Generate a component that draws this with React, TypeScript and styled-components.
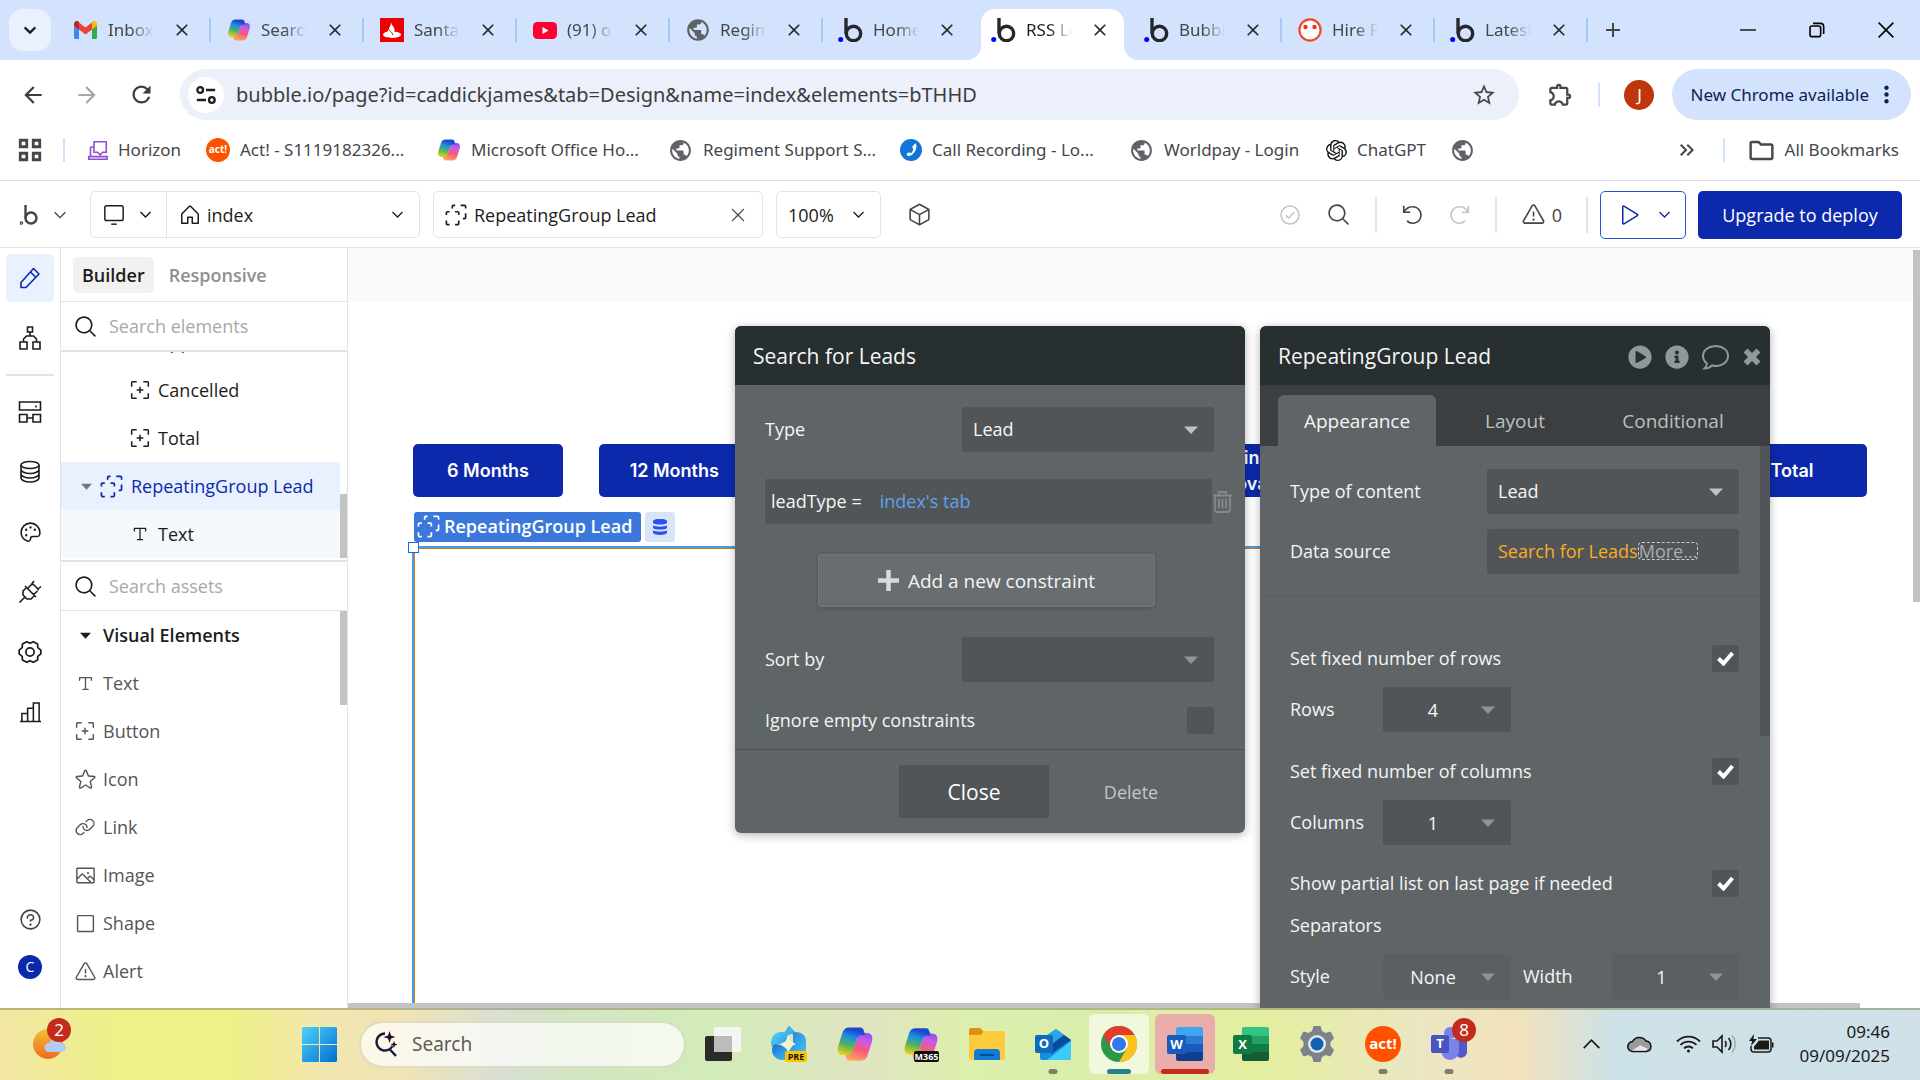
import React from "react";
import styled, { createGlobalStyle, css } from "styled-components";
import {
  MdArrowBack, MdArrowForward, MdRefresh, MdStarBorder, MdOutlineExtension,
  MdMoreVert, MdKeyboardDoubleArrowRight, MdOutlineFolder, MdPublic, MdClose, MdAdd,
} from "react-icons/md";
import { SiOpenai } from "react-icons/si";
import { FaPlayCircle, FaInfoCircle } from "react-icons/fa";
import {
  PiMagnifyingGlass, PiHouse, PiCube, PiWarning, PiStar, PiLink, PiImage, PiPalette,
  PiCheckCircle, PiQuestion, PiX, PiPlay, PiTextT, PiSquare,
} from "react-icons/pi";

const ui = '"Open Sans", "Noto Sans", sans-serif';
const chromeFont = '"Noto Sans", "Open Sans", sans-serif';
const blue = "#0d29ab";
const line = "#e3e3e3";

const Global = createGlobalStyle`
  * { box-sizing: border-box; }
  body { margin: 0; overflow: hidden; background: #fff; }
  button, input, select { font: inherit; color: inherit; }
  button { border: 0; padding: 0; background: none; cursor: pointer; }
  svg { display: block; flex: none; }
`;

const Screen = styled.div`
  display: flex;
  flex-direction: column;
  height: 100vh;
  overflow: hidden;
  font: 400 18px/24px ${ui};
  color: #1c1c1c;
`;

/* ---------- shared line icons ---------- */

type IconProps = { size?: number; weight?: number; children?: React.ReactNode };
const Stroke = ({ size = 24, weight = 1.6, children }: IconProps) => (
  <svg width={size} height={size} viewBox="0 0 24 24" fill="none" stroke="currentColor" strokeWidth={weight} aria-hidden="true">
    {children}
  </svg>
);
const Chevron = ({ size = 18, weight = 2 }: IconProps) => (
  <Stroke size={size} weight={weight}><path d="M4 8l8 8 8-8" /></Stroke>
);
const GroupIcon = ({ size = 24 }: IconProps) => (
  <Stroke size={size} weight={1.8}>
    <path d="M1.500 12V9.500a1 1 0 0 1 1-1H5M11 8.500h3a1 1 0 0 1 1 1V12M15 18v3.500a1 1 0 0 1-1 1h-3M5 22.500H2.500a1 1 0 0 1-1-1V18" />
    <path d="M8 5V2.500a1 1 0 0 1 1-1h2M17 1.500h4.500a1 1 0 0 1 1 1V5M22.500 10v5a1 1 0 0 1-1 1h-2" />
  </Stroke>
);
const ButtonIcon = ({ size = 20 }: IconProps) => (
  <Stroke size={size} weight={1.8}>
    <path d="M2 8V3a1 1 0 0 1 1-1h5M16 2h5a1 1 0 0 1 1 1v5M22 16v5a1 1 0 0 1-1 1h-5M8 22H3a1 1 0 0 1-1-1v-5M12 8v8M8 12h8" />
  </Stroke>
);
const Caret = ({ color = "#a9b1b5", size = 14 }: { color?: string; size?: number }) => (
  <svg width={size} height={size} viewBox="0 0 14 14" aria-hidden="true"><path d="M0 3.500h14L7 11z" fill={color} /></svg>
);
const Cross = () => (
  <svg width="20" height="20" viewBox="0 0 20 20" aria-hidden="true">
    <path d="M3.500 3.500l13 13M16.500 3.500l-13 13" stroke="currentColor" strokeWidth="5.500" />
  </svg>
);
const Plus = () => (
  <svg width="21" height="21" viewBox="0 0 21 21" aria-hidden="true">
    <path d="M10.500 0v21M0 10.500h21" stroke="#d8dadb" strokeWidth="4.500" />
  </svg>
);
const TickMark = () => (
  <svg width="17" height="15" viewBox="0 0 17 15" aria-hidden="true">
    <path d="M1.500 7.500l5 5L15.500 2" fill="none" stroke="#fff" strokeWidth="4" />
  </svg>
);

/* ---------- logos ---------- */

const BubbleLogo = () => (
  <svg width="25" height="24" viewBox="0 0 25 24" fill="none" aria-hidden="true">
    <path d="M8 0v15.500" stroke="#26272c" strokeWidth="3.400" />
    <circle cx="15.500" cy="15.500" r="7.200" stroke="#26272c" strokeWidth="3.400" />
    <circle cx="2.700" cy="21.400" r="2.500" fill="#0000ff" />
  </svg>
);
const Gmail = () => (
  <svg width="23" height="18" viewBox="0 0 23 18" aria-hidden="true">
    <path d="M0 3v13.500A1.500 1.500 0 0 0 1.500 18H5V7z" fill="#4285f4" />
    <path d="M23 3v13.500a1.500 1.500 0 0 1-1.500 1.500H18V7z" fill="#34a853" />
    <path d="M5 1.500v7l6.500 5 6.500-5v-7l-6.500 5z" fill="#ea4335" />
    <path d="M0 3c0-2.600 2.900-4 5-2.200V8.500L0 4.700z" fill="#c5221f" />
    <path d="M23 3c0-2.600-2.900-4-5-2.200V8.500l5-3.800z" fill="#fbbc04" />
  </svg>
);
const ribbon = "M8.500 1.500H15c2 0 2.300 1 2.800 2.800L18.400 6.500H16c-1.800 0-2.600 1-3.200 3l-2 6.500c-.6 2-1.500 3-3.400 3H4.500C1.500 19 .5 16.500 1.300 13.500L4 5c.7-2.300 2-3.500 4.500-3.500z";
const Copilot = ({ size = 24, id }: { size?: number; id: string }) => (
  <svg width={size} height={size} viewBox="0 0 24 24" aria-hidden="true">
    <defs>
      <linearGradient id={id + "a"} x1="0.600" y1="0" x2="0.300" y2="1">
        <stop offset="0.100" stopColor="#1b48cf" /><stop offset="0.350" stopColor="#1a8fe0" />
        <stop offset="0.650" stopColor="#52b25c" /><stop offset="1" stopColor="#e8cf1a" />
      </linearGradient>
      <linearGradient id={id + "b"} x1="0.600" y1="0" x2="0.300" y2="1">
        <stop offset="0" stopColor="#ffa45c" /><stop offset="0.400" stopColor="#f9587c" />
        <stop offset="0.750" stopColor="#c65be8" /><stop offset="1" stopColor="#8a50f0" />
      </linearGradient>
    </defs>
    <path d={ribbon} fill={`url(#${id}b)`} transform="rotate(180 12 12)" />
    <path d={ribbon} fill={`url(#${id}a)`} />
  </svg>
);
const Santander = () => (
  <svg width="24" height="24" viewBox="0 0 24 24" aria-hidden="true">
    <rect width="24" height="24" fill="#ec0000" />
    <path d="M11 4c0 3 4 5 4 8 0 .6 0 1-.2 1.500C18.500 14 21 15 21 16.600 21 18.600 17 20 12 20s-9-1.400-9-3.400c0-1.400 1.800-2.600 4.800-3.200C7.500 11 11 9 11 4z" fill="#fff" />
    <path d="M8 10c.5 3 5 4 4.500 7M13 7c2 3 2.500 5 2 7" stroke="#ec0000" fill="none" strokeWidth="1" />
  </svg>
);
const YouTube = () => (
  <svg width="24" height="17" viewBox="0 0 24 17" aria-hidden="true">
    <rect width="24" height="17" rx="4.500" fill="#ff0033" /><path d="M9.500 5v7l6-3.500z" fill="#fff" />
  </svg>
);
const Face = () => (
  <svg width="24" height="24" viewBox="0 0 24 24" aria-hidden="true">
    <circle cx="12" cy="12" r="10.600" fill="#fff" stroke="#f2492d" strokeWidth="2.200" />
    <circle cx="7.500" cy="9" r="2.200" fill="#e8321e" /><circle cx="16.500" cy="9" r="2.200" fill="#e8321e" />
  </svg>
);
const Act = ({ size = 24 }: IconProps) => (
  <svg width={size} height={size} viewBox="0 0 36 36" aria-hidden="true">
    <circle cx="18" cy="18" r="18" fill="#ff5100" />
    <text x="18" y="23" textAnchor="middle" fontFamily={ui} fontWeight="700" fontSize="15" fill="#fff">act!</text>
  </svg>
);
const Horizon = () => (
  <svg width="21" height="21" viewBox="0 0 24 24" fill="none" stroke="#8e4fd0" strokeWidth="1.800" aria-hidden="true">
    <path d="M8 2h14v12h-4l-3 3-3-3H8zM4 8v10M2 22h21v-3H2zM4 8h4" />
  </svg>
);
const Call = () => (
  <svg width="22" height="22" viewBox="0 0 24 24" aria-hidden="true">
    <circle cx="12" cy="12" r="12" fill="#1274d4" />
    <path d="M16.500 4.500c2 1 2 5 0 8.500s-5 6-8 5.500l-1.500-2.500 3-1.500 1.500 1c2-1 3-3.500 3-5.500l-1.500-1z" fill="#fff" />
  </svg>
);
const BrandMark = () => (
  <svg width="18" height="22" viewBox="0 0 18 22" fill="none" stroke="#444" strokeWidth="2.400" aria-hidden="true">
    <path d="M5.500 1v13" /><circle cx="11" cy="14" r="5.500" /><circle cx="1.400" cy="19" r="0.600" />
  </svg>
);

/* ---------- browser frame ---------- */

const TabStrip = styled.header`
  display: flex;
  align-items: flex-start;
  height: 60px;
  flex: none;
  padding-left: 9px;
  background: #d3e2fd;
  font: 400 17px/24px ${chromeFont};
  color: #45474a;
`;
const TabSearch = styled.button`
  display: grid;
  place-items: center;
  width: 42px;
  height: 42px;
  margin: 9px 7px 0 0;
  border-radius: 14px;
  background: #eaf1fe;
  color: #1f1f1f;
`;
const TabSlot = styled.div<{ $bar?: boolean }>`
  display: flex;
  width: 153px;
  height: 60px;
  padding: 9px 5px 0;
  position: relative;
  ${(p) => p.$bar && css`
    &::after {
      content: "";
      position: absolute;
      right: 0;
      top: 18px;
      width: 2px;
      height: 24px;
      background: #a8c7fa;
    }
  `}
`;
const Tab = styled.div<{ $active?: boolean }>`
  display: flex;
  align-items: center;
  flex: 1;
  min-width: 0;
  height: 51px;
  padding: 0 14px 9px 10px;
  ${(p) => p.$active && css`
    position: relative;
    background: #fff;
    color: #1f1f1f;
    border-radius: 14px 14px 0 0;
    &::before, &::after {
      content: "";
      position: absolute;
      bottom: 0;
      width: 14px;
      height: 14px;
    }
    &::before { right: 100%; background: radial-gradient(circle at 0 0, transparent 14px, #fff 14px); }
    &::after { left: 100%; background: radial-gradient(circle at 100% 0, transparent 14px, #fff 14px); }
  `}
`;
const TabIcon = styled.span`
  display: grid;
  place-items: center;
  width: 25px;
  flex: none;
`;
const TabTitle = styled.span`
  width: 46px;
  margin-left: 10px;
  overflow: hidden;
  white-space: nowrap;
  mask-image: linear-gradient(90deg, #000 50%, transparent);
`;
const TabClose = styled.button`
  margin-left: auto;
  color: #2b2c2e;
`;
const NewTab = styled.button`
  margin: 18px 0 0 13px;
`;
const WindowButtons = styled.div`
  display: flex;
  margin-left: auto;
  color: #000;
`;
const WindowButton = styled.button`
  display: grid;
  place-items: center;
  width: 69px;
  height: 60px;
`;

const AddressBar = styled.div`
  display: flex;
  align-items: center;
  height: 60px;
  flex: none;
  padding: 9px 9px 0 20px;
  font: 400 17px/24px ${chromeFont};
  color: #45474a;
`;
const NavButton = styled.button<{ $dim?: boolean }>`
  width: 26px;
  margin-right: 28px;
  color: ${(p) => (p.$dim ? "#a6a6a6" : "#3c3d40")};
`;
const Omnibox = styled.div`
  display: flex;
  align-items: center;
  flex: 1;
  height: 51px;
  margin-left: -2px;
  padding: 0 22px 0 8px;
  border-radius: 26px;
  background: #ecf0fa;
`;
const SiteInfo = styled.button`
  display: grid;
  place-items: center;
  width: 36px;
  height: 36px;
  border-radius: 50%;
  background: #fff;
  color: #1f1f1f;
`;
const UrlInput = styled.input`
  flex: 1;
  min-width: 0;
  margin-left: 12px;
  padding: 0;
  border: 0;
  background: none;
  font-size: 20px;
  color: #3c3d40;
`;
const Divider = styled.span<{ $h?: number; $c?: string; $after?: number }>`
  width: 2px;
  height: ${(p) => p.$h ?? 24}px;
  flex: none;
  margin-right: ${(p) => p.$after ?? 0}px;
  background: ${(p) => p.$c ?? "#d3e2fd"};
`;
const Extensions = styled.button`
  margin: 0 24px 0 28px;
`;
const Profile = styled.button`
  width: 30px;
  height: 30px;
  margin: 0 18px 0 24px;
  border-radius: 50%;
  background: #bf360c;
  color: #fff;
`;
const UpdatePill = styled.button`
  display: flex;
  align-items: center;
  gap: 4px;
  height: 51px;
  padding: 0 11px 0 18px;
  border-radius: 26px;
  background: #d3e2fd;
  color: #0a2357;
  white-space: nowrap;
`;

const Bookmarks = styled.nav`
  display: flex;
  align-items: center;
  height: 61px;
  flex: none;
  padding: 0 21px 0 17px;
  border-bottom: 1px solid #dedede;
  font: 400 17px/24px ${chromeFont};
  color: #45474a;
`;
const Bookmark = styled.a<{ $w: number }>`
  display: flex;
  align-items: center;
  gap: 10px;
  width: ${(p) => p.$w}px;
  color: inherit;
  text-decoration: none;
  white-space: nowrap;
`;
const AllBookmarks = styled.button`
  display: flex;
  align-items: center;
  gap: 9px;
  margin-left: 22px;
`;
const Overflow = styled.button`
  margin: 0 24px 0 auto;
`;
const AppsGrid = styled.button`
  margin-right: 20px;
`;

/* ---------- editor header ---------- */

const EditorBar = styled.div`
  display: flex;
  align-items: center;
  height: 67px;
  flex: none;
  padding: 1px 18px 0 20px;
  border-bottom: 1px solid ${line};
`;
const BrandMenu = styled.button`
  display: flex;
  align-items: center;
  gap: 14px;
  width: 70px;
  color: #444;
`;
const Boxed = styled.div<{ $w: number }>`
  display: flex;
  align-items: center;
  width: ${(p) => p.$w}px;
  height: 47px;
  margin-right: 13px;
  border: 1px solid ${line};
  border-radius: 5px;
`;
const DeviceButton = styled.button`
  display: flex;
  align-items: center;
  gap: 13px;
  width: 76px;
  height: 100%;
  padding-left: 12px;
  border-right: 1px solid ${line};
`;
const MenuButton = styled.button<{ $gap?: number }>`
  display: flex;
  align-items: center;
  gap: ${(p) => p.$gap ?? 7}px;
  flex: 1;
  padding: 0 14px 0 11px;
  white-space: nowrap;
  > :last-child { margin-left: auto; }
`;
const Cube = styled.button`
  margin-left: 13px;
  color: #444;
`;
const Tools = styled.div`
  display: flex;
  align-items: center;
  margin-left: auto;
  color: #444;
`;
const Tool = styled.button<{ $gap: number; $dim?: boolean }>`
  display: flex;
  align-items: center;
  gap: 6px;
  margin-right: ${(p) => p.$gap}px;
  color: ${(p) => (p.$dim ? "#c4c4c4" : "#444")};
`;
const Preview = styled.button`
  display: flex;
  align-items: center;
  gap: 17px;
  width: 86px;
  height: 48px;
  margin: 0 12px;
  padding-left: 15px;
  border: 1px solid #2155d3;
  border-radius: 5px;
  color: ${blue};
`;
const Upgrade = styled.button`
  width: 204px;
  height: 48px;
  border-radius: 5px;
  background: ${blue};
  color: #fff;
`;

/* ---------- editor body ---------- */

const Workspace = styled.div`
  display: flex;
  flex: 1;
  min-height: 0;
`;
const Rail = styled.nav`
  display: flex;
  flex-direction: column;
  align-items: center;
  gap: 12px;
  width: 61px;
  flex: none;
  padding: 6px 0 17px;
  border-right: 1px solid ${line};
`;
const RailButton = styled.button<{ $active?: boolean }>`
  display: grid;
  place-items: center;
  width: 48px;
  height: 48px;
  border-radius: 5px;
  background: ${(p) => (p.$active ? "#e9f1fe" : "none")};
  color: ${(p) => (p.$active ? blue : "#1c1c1c")};
`;
const RailRule = styled.hr`
  width: 48px;
  height: 2px;
  margin: 0;
  border: 0;
  background: ${line};
`;
const RailFoot = styled.div`
  margin-top: auto;
`;
const UserDot = styled.span`
  display: grid;
  place-items: center;
  width: 24px;
  height: 24px;
  border-radius: 50%;
  background: ${blue};
  color: #fff;
  font-size: 14px;
`;

const Side = styled.aside`
  display: flex;
  flex-direction: column;
  width: 287px;
  flex: none;
  border-right: 1px solid ${line};
`;
const ModeTabs = styled.div`
  display: flex;
  align-items: center;
  gap: 6px;
  height: 54px;
  flex: none;
  padding-left: 12px;
  border-bottom: 1px solid ${line};
`;
const ModeTab = styled.button<{ $active?: boolean }>`
  height: 36px;
  padding: 0 9px;
  border-radius: 5px;
  font-weight: 600;
  background: ${(p) => (p.$active ? "#f1f1f1" : "none")};
  color: ${(p) => (p.$active ? "#1c1c1c" : "#8f8f8f")};
`;
const SearchRow = styled.label<{ $rule: number }>`
  display: flex;
  align-items: center;
  gap: 11px;
  height: ${(p) => 48 + p.$rule}px;
  flex: none;
  padding-left: 12px;
  border-bottom: ${(p) => p.$rule}px solid ${line};
`;
const SearchInput = styled.input`
  flex: 1;
  min-width: 0;
  padding: 0;
  border: 0;
  background: none;
  &::placeholder { color: #a8a8a8; opacity: 1; }
`;
const Tree = styled.div`
  display: flex;
  flex-direction: column;
  justify-content: flex-end;
  position: relative;
  height: 210px;
  flex: none;
  padding-bottom: 2px;
  overflow: hidden;
  border-bottom: 2px solid ${line};
`;
const TreeRow = styled.button<{ $level: number; $tone?: "selected" | "child" }>`
  display: flex;
  align-items: center;
  gap: 8px;
  height: 48px;
  flex: none;
  margin-right: 7px;
  padding-left: ${(p) => (p.$level === 1 ? 20 : 69)}px;
  white-space: nowrap;
  background: ${(p) => (p.$tone === "selected" ? "#e9f1fe" : p.$tone === "child" ? "#f4f9fe" : "none")};
  color: ${(p) => (p.$tone === "selected" ? blue : "#1c1c1c")};
`;
const Thumb = styled.span<{ $top: number; $h: number; $w?: number; $dark?: boolean }>`
  position: absolute;
  right: 0;
  top: ${(p) => p.$top}px;
  width: ${(p) => p.$w ?? 7}px;
  height: ${(p) => p.$h}px;
  background: ${(p) => (p.$dark ? "#515558" : "#c3c3c3")};
`;
const Assets = styled.div`
  position: relative;
  flex: 1;
  min-height: 0;
  overflow: hidden;
`;
const Asset = styled.button<{ $head?: boolean }>`
  display: flex;
  align-items: center;
  gap: 7px;
  width: 100%;
  height: 48px;
  padding-left: 13px;
  font-weight: ${(p) => (p.$head ? 600 : 400)};
  color: ${(p) => (p.$head ? "#1c1c1c" : "#555")};
`;
const AssetIcon = styled.span`
  display: grid;
  place-items: center;
  width: 22px;
`;

const Stage = styled.main`
  position: relative;
  flex: 1;
  min-width: 0;
  overflow: hidden;
  background: linear-gradient(#fafafa 54px, #fff 54px);
`;
const ButtonRow = styled.div`
  position: absolute;
  left: 65px;
  top: 196px;
  display: grid;
  grid-template-columns: repeat(8, 150px);
  justify-content: space-between;
  width: 1454px;
`;
const StageButton = styled.button<{ $col: number }>`
  grid-column: ${(p) => p.$col};
  height: 53px;
  padding: 0 20px;
  border-radius: 5px;
  background: ${blue};
  color: #fff;
  font: 600 18px/26px Inter, "Liberation Sans", sans-serif;
`;
const Group = styled.section`
  position: absolute;
  left: 66px;
  top: 300px;
  width: 1300px;
  height: 600px;
  border: 1px solid #db7f1d;
  box-shadow: 0 0 0 2px #4a9be2;
`;
const GroupTag = styled.div`
  position: absolute;
  left: 66px;
  top: 264px;
  display: flex;
  gap: 4px;
`;
const TagName = styled.span`
  display: flex;
  align-items: center;
  gap: 4px;
  height: 30px;
  padding: 0 9px 2px 3px;
  border-radius: 3px;
  background: #3c78dc;
  color: #fff;
  font-weight: 600;
  white-space: nowrap;
`;
const TagData = styled.span`
  display: grid;
  place-items: center;
  width: 30px;
  height: 30px;
  border-radius: 3px;
  background: #d8e4f8;
  color: #2c50f2;
`;
const Handle = styled.span`
  position: absolute;
  left: -7px;
  top: -7px;
  width: 11px;
  height: 11px;
  border: 1px solid #1b66f0;
  background: #fff;
`;
const BottomThumb = styled.span`
  position: absolute;
  left: 0;
  right: 60px;
  bottom: 0;
  height: 5px;
  background: #c3c3c3;
`;

/* ---------- property windows ---------- */

const Panel = styled.section<{ $left: number }>`
  position: absolute;
  left: ${(p) => p.$left}px;
  top: 78px;
  width: 510px;
  border-radius: 6px;
  background: #5f6467;
  color: #f5f5f5;
  box-shadow: 0 2px 10px rgba(0, 0, 0, 0.3);
  overflow: hidden;
`;
const PanelHead = styled.header`
  display: flex;
  align-items: center;
  justify-content: space-between;
  height: 59px;
  padding: 0 8px 0 18px;
  background: #282f30;
`;
const PanelTitle = styled.h2`
  margin: 0;
  font-size: 21px;
  font-weight: 400;
`;
const HeadIcons = styled.div`
  display: flex;
  align-items: center;
  gap: 13px;
  padding-top: 3px;
  color: #8f999b;
`;
const IconButton = styled.button`
  display: block;
`;
const PanelTabs = styled.div`
  display: flex;
  height: 61px;
  padding: 10px 18px 0;
  background: #3b3f41;
`;
const PanelTab = styled.button<{ $active?: boolean }>`
  flex: 1;
  border-radius: 6px 6px 0 0;
  font-size: 19px;
  background: ${(p) => (p.$active ? "#5f6467" : "none")};
  color: ${(p) => (p.$active ? "#f5f5f5" : "#bdbfc0")};
`;
const PanelBody = styled.div<{ $pad: number }>`
  position: relative;
  padding: ${(p) => p.$pad}px 31px 15px 30px;
`;
const Row = styled.div<{ $top?: number; $h?: number }>`
  display: flex;
  align-items: center;
  height: ${(p) => p.$h ?? 45}px;
  margin-top: ${(p) => p.$top ?? 0}px;
`;
const Label = styled.label<{ $w?: number; $indent?: boolean }>`
  width: ${(p) => (p.$w ? p.$w + "px" : "auto")};
  flex: ${(p) => (p.$w ? "none" : "1")};
  padding: 0 0 2px ${(p) => (p.$indent ? 12 : 0)}px;
  white-space: nowrap;
`;
const SelectBox = styled.span<{ $w: number; $faint?: boolean }>`
  position: relative;
  display: block;
  width: ${(p) => p.$w}px;
  height: 45px;
  flex: none;
  border-radius: 2px;
  background: ${(p) => (p.$faint ? "#5a5f62" : "#515558")};
  > svg { position: absolute; right: 16px; top: 16px; pointer-events: none; }
`;
const Select = styled.select<{ $center?: boolean }>`
  appearance: none;
  width: 100%;
  height: 100%;
  border: 0;
  padding: ${(p) => (p.$center ? "0 28px 0 0" : "0 30px 2px 11px")};
  background: none;
  text-align-last: ${(p) => (p.$center ? "center" : "left")};
  option { color: #111; }
`;
const Expression = styled.div<{ $wide?: boolean }>`
  display: flex;
  align-items: center;
  gap: ${(p) => (p.$wide ? 18 : 0)}px;
  height: 45px;
  flex: ${(p) => (p.$wide ? "1" : "none")};
  width: ${(p) => (p.$wide ? "auto" : "252px")};
  padding: 0 0 1px ${(p) => (p.$wide ? 6 : 11)}px;
  border-radius: 2px;
  background: #515558;
  white-space: nowrap;
`;
const ExprLink = styled.button<{ $c: string }>`
  color: ${(p) => p.$c};
`;
const More = styled.button`
  height: 18px;
  border: 1px dashed #c9cccd;
  border-radius: 4px;
  color: #a9adaf;
  line-height: 16px;
`;
const ConstraintRow = styled(Row)`
  gap: 1px;
  margin-right: -18px;
`;
const AddButton = styled.button`
  display: flex;
  align-items: center;
  justify-content: center;
  gap: 9px;
  width: 337px;
  height: 53px;
  margin: 30px 0 0 53px;
  border: 1px solid #72787a;
  border-radius: 3px;
  background: #686d70;
  box-shadow: 0 1px 4px rgba(0, 0, 0, 0.2);
  font-size: 19px;
`;
const Tick = styled.span`
  position: relative;
  display: block;
  width: 27px;
  height: 27px;
  border-radius: 2px;
  background: #515558;
  svg { position: absolute; left: 5px; top: 6px; display: none; pointer-events: none; }
  input:checked + svg { display: block; }
`;
const TickInput = styled.input`
  appearance: none;
  display: block;
  width: 27px;
  height: 27px;
  margin: 0;
`;
const Rule = styled.hr`
  height: 1px;
  margin: 22px -21px 48px -30px;
  border: 0;
  background: #585d60;
`;
const PanelFoot = styled.footer`
  display: flex;
  justify-content: flex-end;
  gap: 7px;
  padding: 15px 39px 15px 0;
  border-top: 1px solid #4b4f52;
`;
const CloseButton = styled.button`
  width: 150px;
  height: 53px;
  background: #515558;
  color: #fff;
  font-size: 21px;
`;
const DeleteButton = styled.button`
  width: 150px;
  color: #c3c6c7;
`;

/* ---------- taskbar ---------- */

const Taskbar = styled.footer`
  display: flex;
  align-items: center;
  height: 72px;
  flex: none;
  padding: 0 30px 2px 33px;
  border-top: 2px solid rgba(120, 120, 80, 0.45);
  background: linear-gradient(90deg, #f2e7a5 0, #eef088 6%, #eef088 12%, #f2e6b0 17%, #f0e3b5 21%,
    #d9dfd4 26%, #d3e4c4 29%, #d2ecb8 37%, #e0e4c2 45%, #dcefac 50%, #dbedaa 57%, #e4eea0 66%,
    #ece6c4 74%, #f2e2bc 79%, #cde2e6 84%, #cfe0e9 100%);
  font: 400 17px/24px ${chromeFont};
`;
const Widgets = styled.button`
  position: relative;
  width: 38px;
  margin-right: 231px;
`;
const Count = styled.span<{ $x: number; $y: number }>`
  position: absolute;
  left: ${(p) => p.$x}px;
  top: ${(p) => p.$y}px;
  display: grid;
  place-items: center;
  width: 24px;
  height: 24px;
  border-radius: 50%;
  background: #c42b1c;
  color: #fff;
`;
const SearchBox = styled.label`
  display: flex;
  align-items: center;
  gap: 14px;
  width: 327px;
  height: 47px;
  margin: 0 7px 0 22px;
  padding: 0 13px;
  border: 2px solid rgba(130, 140, 60, 0.25);
  border-radius: 24px;
  background: rgba(255, 255, 255, 0.72);
  font-size: 19px;
`;
const TaskSearchInput = styled(SearchInput)`
  &::placeholder { color: #5c5c5c; }
`;
const Apps = styled.div`
  display: flex;
  gap: 6px;
`;
const AppTile = styled.button<{ $tone?: "light" | "red"; $dot?: string; $dotW?: number }>`
  position: relative;
  display: grid;
  place-items: center;
  width: 60px;
  height: 60px;
  border-radius: 6px;
  ${(p) => p.$tone === "light" && css`background: rgba(255, 255, 255, 0.6);`}
  ${(p) => p.$tone === "red" && css`background: #e9aeaa;`}
  ${(p) => p.$dot && css`
    &::after {
      content: "";
      position: absolute;
      left: 50%;
      bottom: 0;
      width: ${p.$dotW ?? 9}px;
      height: 5px;
      border-radius: 3px;
      transform: translateX(-50%);
      background: ${p.$dot};
    }
  `}
`;
const Tray = styled.div`
  display: flex;
  align-items: center;
  margin-left: auto;
  color: #1a1a1a;
`;
const TrayItem = styled.button<{ $gap: number }>`
  margin-right: ${(p) => p.$gap}px;
`;
const Clock = styled.time`
  text-align: right;
  white-space: pre-line;
`;

const Weather = () => (
  <svg width="34" height="32" viewBox="0 0 34 32" aria-hidden="true">
    <defs><linearGradient id="sun" x1="0" y1="0" x2="0" y2="1"><stop stopColor="#f2c033" /><stop offset="1" stopColor="#f2691d" /></linearGradient></defs>
    <circle cx="15" cy="16" r="15" fill="url(#sun)" />
    <path d="M16 24a4.500 4.500 0 0 1 0-9 6.500 6.500 0 0 1 12 0 4.500 4.500 0 0 1 1 9z" fill="#b4ccf3" />
  </svg>
);
const Windows = () => (
  <svg width="35" height="35" viewBox="0 0 35 35" aria-hidden="true">
    <defs><linearGradient id="win" gradientUnits="userSpaceOnUse" x1="0" y1="0" x2="35" y2="35"><stop stopColor="#4fd0fb" /><stop offset="1" stopColor="#0070d0" /></linearGradient></defs>
    <path d="M1 0h16v17H0V1zM18 0h16l1 1v16H18zM0 18h17v17H1l-1-1zM18 18h17v16l-1 1H18z" fill="url(#win)" />
  </svg>
);
const TaskView = () => (
  <svg width="36" height="35" viewBox="0 0 36 35" aria-hidden="true">
    <rect x="0" y="9" width="27" height="25" rx="2" fill="#2b2b2b" />
    <rect x="9" y="0" width="27" height="25" rx="2" fill="#f5f5f5" />
    <path d="M9 9h18v16H9z" fill="#bcbcbc" />
  </svg>
);
const CopilotPre = () => (
  <svg width="36" height="36" viewBox="0 0 36 36" aria-hidden="true">
    <defs>
      <linearGradient id="preA" x1="0" y1="0" x2="1" y2="1"><stop stopColor="#62dcf8" /><stop offset="1" stopColor="#1b8fe6" /></linearGradient>
      <linearGradient id="preB" x1="0" y1="0" x2="1" y2="1"><stop stopColor="#1573d2" /><stop offset="1" stopColor="#4cc8f4" /></linearGradient>
    </defs>
    <path d="M18 0l6 6c6 0 11 3 11 9v10c0 6-4 9-10 9l-7-9 4-6V8h-9z" fill="url(#preB)" />
    <path d="M18 0c0 5-4 6-9 6C3 7 0 11 0 17c0 2 1 4 2 5 2-4 5-4 8-4l6-2V10l8-4z" fill="url(#preA)" />
    <path d="M2 20c-3 6 1 13 8 14h15c-6-1-8-4-8-10l-7-5c-4-1-7-1-8 1z" fill="url(#preB)" />
    <path d="M17 10l2.500 5.500L25 18l-5.500 2.500L17 26l-2.500-5.500L9 18l5.500-2.500z" fill="#f4f4d0" />
    <rect x="14" y="25" width="22" height="11" rx="2" fill="#ffc400" />
    <text x="25" y="34" textAnchor="middle" fontFamily={ui} fontWeight="700" fontSize="9" fill="#111">PRE</text>
  </svg>
);
const M365 = () => (
  <svg width="36" height="36" viewBox="0 0 36 36" aria-hidden="true">
    <Copilot size={36} id="m365" />
    <rect x="11" y="25" width="25" height="11" rx="2" fill="#0c0c0c" />
    <text x="23.500" y="34" textAnchor="middle" fontFamily={ui} fontWeight="700" fontSize="9" fill="#fff">M365</text>
  </svg>
);
const Explorer = () => (
  <svg width="36" height="34" viewBox="0 0 36 34" aria-hidden="true">
    <path d="M0 3a2 2 0 0 1 2-2h9l4 4h19a2 2 0 0 1 2 2v8H0z" fill="#d9930c" />
    <path d="M0 8h12l3-4h19a2 2 0 0 1 2 2v25a2 2 0 0 1-2 2H2a2 2 0 0 1-2-2z" fill="#ffcb3e" />
    <path d="M5 33V26a4 4 0 0 1 4-4h18a4 4 0 0 1 4 4v7z" fill="#0f7dd6" /><path d="M11 28h14" stroke="#0a4d9a" strokeWidth="2" />
  </svg>
);
const Letter = ({ x, y, s, fill, ch }: { x: number; y: number; s: number; fill: string; ch: string }) => (
  <g>
    <rect x={x} y={y} width={s} height={s} rx="2" fill={fill} />
    <text x={x + s / 2} y={y + s - 5} textAnchor="middle" fontFamily={ui} fontWeight="700" fontSize="13" fill="#fff">{ch}</text>
  </g>
);
const Outlook = () => (
  <svg width="36" height="34" viewBox="0 0 36 34" aria-hidden="true">
    <path d="M5 13L21 2l15 11v18a2 2 0 0 1-2 2H7a2 2 0 0 1-2-2z" fill="#1490df" />
    <path d="M21 2l8 6-16 12-8-7z" fill="#2aa5ec" />
    <path d="M29 8l7 5-20 14-4-6z" fill="#0a4ba0" />
    <path d="M36 14v17a2 2 0 0 1-2 2H12z" fill="#3ccbf4" />
    <Letter x={0} y={8} s={18} fill="#0f6cbd" ch="O" />
  </svg>
);
const Chrome = () => (
  <svg width="36" height="36" viewBox="0 0 36 36" aria-hidden="true">
    <circle cx="18" cy="18" r="18" fill="#2a9a48" />
    <path d="M18 9h15.600A18 18 0 0 1 18 36l7.800-13.500z" fill="#fcc31e" />
    <path d="M2.400 9A18 18 0 0 1 33.600 9H18l-7.800 13.500z" fill="#e33b2e" />
    <circle cx="18" cy="18" r="9" fill="#fff" /><circle cx="18" cy="18" r="7" fill="#2f78ee" />
  </svg>
);
const Office = ({ tones, tile, ch }: { tones: string[]; tile: string; ch: string }) => (
  <svg width="36" height="34" viewBox="0 0 36 34" aria-hidden="true">
    <path d="M9 2a2 2 0 0 1 2-2h23a2 2 0 0 1 2 2v7H9z" fill={tones[0]} />
    <path d="M9 9h27v8H9z" fill={tones[1]} /><path d="M9 17h27v8H9z" fill={tones[2]} />
    <path d="M9 25h27v7a2 2 0 0 1-2 2H11a2 2 0 0 1-2-2z" fill={tones[3]} />
    <Letter x={0} y={8} s={19} fill={tile} ch={ch} />
  </svg>
);
const Gear = () => (
  <svg width="36" height="36" viewBox="0 0 36 36" aria-hidden="true">
    <path d="M14.500 0h7l1.500 5 3.500 2 5-1.500L35 12l-3.500 4v4l3.500 4-3.500 6.500-5-1.500-3.500 2-1.500 5h-7L13 31l-3.500-2-5 1.500L1 24l3.500-4v-4L1 12l3.500-6.500 5 1.500L13 5z" fill="#7a828b" />
    <circle cx="18" cy="18" r="9" fill="#e4e7ea" /><circle cx="18" cy="18" r="6.500" fill="#0e63b0" />
  </svg>
);
const Teams = () => (
  <svg width="36" height="34" viewBox="0 0 36 34" aria-hidden="true">
    <circle cx="19" cy="6" r="6" fill="#7b83eb" /><circle cx="30" cy="8" r="4" fill="#5059c9" />
    <path d="M24 12h12v11a6 6 0 0 1-12 3z" fill="#5059c9" /><path d="M10 12h18v12a9 9 0 0 1-18 0z" fill="#7b83eb" />
    <Letter x={0} y={8} s={18} fill="#4b53bc" ch="T" />
  </svg>
);

/* ---------- data ---------- */

const tabs: { title: string; icon: React.ReactNode; active?: boolean; bar?: boolean }[] = [
  { title: "Inbox", icon: <Gmail />, bar: true },
  { title: "Search", icon: <Copilot id="t1" />, bar: true },
  { title: "Santander", icon: <Santander />, bar: true },
  { title: "(91) o", icon: <YouTube />, bar: true },
  { title: "Regiment", icon: <MdPublic size={26} color="#5f6368" />, bar: true },
  { title: "Home", icon: <BubbleLogo /> },
  { title: "RSS Leads", icon: <BubbleLogo />, active: true },
  { title: "Bubble", icon: <BubbleLogo />, bar: true },
  { title: "Hire Pro", icon: <Face />, bar: true },
  { title: "Latest", icon: <BubbleLogo />, bar: true },
];
const bookmarks: { label: string; icon: React.ReactNode; w: number }[] = [
  { label: "Horizon", icon: <Horizon />, w: 119 },
  { label: "Act! - S1119182326...", icon: <Act />, w: 231 },
  { label: "Microsoft Office Ho...", icon: <Copilot id="b1" />, w: 231 },
  { label: "Regiment Support S...", icon: <MdPublic size={25} color="#5f6368" />, w: 232 },
  { label: "Call Recording - Lo...", icon: <Call />, w: 229 },
  { label: "Worldpay - Login", icon: <MdPublic size={25} color="#5f6368" />, w: 197 },
  { label: "ChatGPT", icon: <SiOpenai size={21} color="#111" />, w: 124 },
  { label: "", icon: <MdPublic size={25} color="#5f6368" />, w: 25 },
];
const rail: { name: string; icon: React.ReactNode }[] = [
  { name: "Reusables", icon: <Stroke><path d="M1.500 2h21v8h-21zM1.500 14.500h7.500v7.500H1.500zM15 14.500h7.500v7.500H15zM9 18h6M18 5.500v2" /></Stroke> },
  { name: "Data", icon: <Stroke><ellipse cx="12" cy="5" rx="9" ry="3.500" /><path d="M3 5v13c0 2 4 4 9 4s9-2 9-4V5M3 9.500c0 2 4 4 9 4s9-2 9-4M3 14c0 2 4 4 9 4s9-2 9-4" /></Stroke> },
  { name: "Styles", icon: <PiPalette size={25} /> },
  { name: "Plugins", icon: <Stroke><path d="M7 6l11 11M8.500 7.500L5 11v4l4 4h4l3.500-3.500M15.500 14.500l4-3.500M9.500 8.500l4-4h2l4.500 4.500v1.500M1.500 22.500L7 17M13 5l3-4M19.500 9.500l3.500-3" /></Stroke> },
  { name: "Settings", icon: <Stroke size={26}><circle cx="12" cy="12" r="3.800" /><path d="M9 2.500l3 1.500 3-1.500 4 2.200.2 3.300L22 10.300v3.400L19.200 16l-.2 3.300-4 2.200-3-1.500-3 1.500-4-2.200L4.800 16 2 13.700v-3.400L4.800 8 5 4.700z" strokeLinejoin="round" /></Stroke> },
  { name: "Logs", icon: <Stroke size={23}><path d="M1 21.500h22M3 21v-8h6v8M9 21V7.500h6V21M15 21V2h6v19" /></Stroke> },
];
const assets: [string, React.ReactNode][] = [
  ["Text", <PiTextT size={21} />],
  ["Button", <ButtonIcon />],
  ["Icon", <PiStar size={23} />],
  ["Link", <PiLink size={22} />],
  ["Image", <PiImage size={23} />],
  ["Shape", <PiSquare size={23} />],
  ["Alert", <PiWarning size={23} />],
];

const Choice = ({ id, value, w, center, faint, dim }: { id: string; value: string; w: number; center?: boolean; faint?: boolean; dim?: boolean }) => (
  <SelectBox $w={w} $faint={faint}>
    <Select id={id} $center={center} defaultValue={value}><option value={value}>{value}</option></Select>
    <Caret color={dim ? "#8d9396" : "#bcc4c9"} />
  </SelectBox>
);
const Check = ({ id, on }: { id: string; on?: boolean }) => (
  <Tick><TickInput type="checkbox" id={id} defaultChecked={on} /><TickMark /></Tick>
);

export default function App() {
  return (
    <Screen>
      <Global />
      <TabStrip>
        <TabSearch aria-label="Search tabs"><Chevron size={16} weight={3.4} /></TabSearch>
        {tabs.map((t) => (
          <TabSlot key={t.title} $bar={t.bar}>
            <Tab $active={t.active}>
              <TabIcon>{t.icon}</TabIcon>
              <TabTitle>{t.title}</TabTitle>
              <TabClose aria-label={`Close ${t.title}`}><MdClose size={20} /></TabClose>
            </Tab>
          </TabSlot>
        ))}
        <NewTab aria-label="New tab"><MdAdd size={24} /></NewTab>
        <WindowButtons>
          <WindowButton aria-label="Minimise"><Stroke size={16} weight={2}><path d="M0 12h24" /></Stroke></WindowButton>
          <WindowButton aria-label="Restore"><Stroke size={16} weight={2.4}><rect x="1.500" y="6" width="16" height="16" rx="3" /><path d="M6 2h11c3 0 5 2 5 5v11" /></Stroke></WindowButton>
          <WindowButton aria-label="Close window"><Stroke size={16} weight={2.4}><path d="M1 1l22 22M23 1L1 23" /></Stroke></WindowButton>
        </WindowButtons>
      </TabStrip>

      <AddressBar>
        <NavButton aria-label="Back"><MdArrowBack size={26} /></NavButton>
        <NavButton aria-label="Forward" $dim><MdArrowForward size={26} /></NavButton>
        <NavButton aria-label="Reload"><MdRefresh size={27} /></NavButton>
        <Omnibox>
          <SiteInfo aria-label="Site information">
            <Stroke size={20} weight={2.8}><circle cx="5" cy="6" r="3.400" /><path d="M12 6h11M1 18h11" /><circle cx="19" cy="18" r="3.400" /></Stroke>
          </SiteInfo>
          <UrlInput aria-label="Address" defaultValue="bubble.io/page?id=caddickjames&tab=Design&name=index&elements=bTHHD" />
          <MdStarBorder size={26} />
        </Omnibox>
        <Extensions aria-label="Extensions"><MdOutlineExtension size={27} /></Extensions>
        <Divider />
        <Profile aria-label="Profile">J</Profile>
        <UpdatePill>New Chrome available<MdMoreVert size={27} /></UpdatePill>
      </AddressBar>

      <Bookmarks>
        <AppsGrid aria-label="Apps"><Stroke size={26} weight={2.6}><path d="M3 3h6v6H3zM15 3h6v6h-6zM3 15h6v6H3zM15 15h6v6h-6z" /></Stroke></AppsGrid>
        <Divider $after={22} />
        {bookmarks.map((b, i) => (
          <Bookmark key={i} href="#" $w={b.w} aria-label={b.label || "Site"}>{b.icon}{b.label}</Bookmark>
        ))}
        <Overflow aria-label="More bookmarks"><MdKeyboardDoubleArrowRight size={24} /></Overflow>
        <Divider />
        <AllBookmarks><MdOutlineFolder size={29} />All Bookmarks</AllBookmarks>
      </Bookmarks>

      <EditorBar>
        <BrandMenu aria-label="Bubble menu"><BrandMark /><Chevron size={16} /></BrandMenu>
        <Boxed $w={330}>
          <DeviceButton aria-label="Device">
            <Stroke size={22}><rect x="2" y="2" width="20" height="16" rx="2" /><path d="M9 22h6" /></Stroke>
            <Chevron size={15} weight={2.4} />
          </DeviceButton>
          <MenuButton $gap={5}><PiHouse size={24} />index<Chevron size={15} /></MenuButton>
        </Boxed>
        <Boxed $w={330}>
          <MenuButton><GroupIcon size={22} />RepeatingGroup Lead<PiX size={20} color="#444" /></MenuButton>
        </Boxed>
        <Boxed $w={105}><MenuButton>100%<Chevron size={15} /></MenuButton></Boxed>
        <Cube aria-label="Components"><PiCube size={25} /></Cube>
        <Tools>
          <Tool $gap={24} $dim aria-label="Saved"><PiCheckCircle size={24} /></Tool>
          <Tool $gap={24} aria-label="Search"><PiMagnifyingGlass size={25} /></Tool>
          <Divider $h={36} $c={line} $after={24} />
          <Tool $gap={26} aria-label="Undo"><Stroke size={22} weight={1.8}><path d="M3 2v7h7M3.500 8.500C5.500 5 9 3 12.500 3a9 9 0 1 1-6 15.500" /></Stroke></Tool>
          <Tool $gap={24} $dim aria-label="Redo"><Stroke size={22} weight={1.8}><path d="M21 2v7h-7M20.500 8.500C18.500 5 15 3 11.500 3a9 9 0 1 0 6 15.500" /></Stroke></Tool>
          <Divider $h={36} $c={line} $after={24} />
          <Tool $gap={24} aria-label="Issues"><PiWarning size={25} />0</Tool>
          <Divider $h={36} $c={line} />
          <Preview aria-label="Preview"><PiPlay size={24} /><Chevron size={15} /></Preview>
          <Upgrade>Upgrade to deploy</Upgrade>
        </Tools>
      </EditorBar>

      <Workspace>
        <Rail>
          <RailButton $active aria-label="Design"><Stroke><path d="M3 21.500v-5L15.500 2.500l5.500 5.500L8 21.500zM12.500 6l5.500 5.500" strokeLinejoin="round" /></Stroke></RailButton>
          <RailButton aria-label="Workflow"><Stroke><path d="M9.500 1h5v5h-5zM2 16h7v7H2zM15 16h7v7h-7zM12 6v4M5.500 16v-3l3-3h7l3 3v3" /></Stroke></RailButton>
          <RailRule />
          {rail.map((r) => <RailButton key={r.name} aria-label={r.name}>{r.icon}</RailButton>)}
          <RailFoot>
            <RailButton aria-label="Help"><PiQuestion size={25} color="#444" /></RailButton>
            <RailButton aria-label="Account"><UserDot>C</UserDot></RailButton>
          </RailFoot>
        </Rail>

        <Side>
          <ModeTabs><ModeTab $active>Builder</ModeTab><ModeTab>Responsive</ModeTab></ModeTabs>
          <SearchRow $rule={2}><PiMagnifyingGlass size={25} /><SearchInput aria-label="Search elements" placeholder="Search elements" /></SearchRow>
          <Tree>
            <TreeRow $level={2}><ButtonIcon />Approval</TreeRow>
            <TreeRow $level={2}><ButtonIcon />Cancelled</TreeRow>
            <TreeRow $level={2}><ButtonIcon />Total</TreeRow>
            <TreeRow $level={1} $tone="selected"><Caret color="#777" size={11} /><GroupIcon size={23} />RepeatingGroup Lead</TreeRow>
            <TreeRow $level={2} $tone="child"><PiTextT size={20} />Text</TreeRow>
            <Thumb $top={142} $h={64} />
          </Tree>
          <SearchRow $rule={1}><PiMagnifyingGlass size={25} /><SearchInput aria-label="Search assets" placeholder="Search assets" /></SearchRow>
          <Assets>
            <Asset $head><AssetIcon><Caret color="#1c1c1c" size={11} /></AssetIcon>Visual Elements</Asset>
            {assets.map(([name, icon]) => <Asset key={name}><AssetIcon>{icon}</AssetIcon>{name}</Asset>)}
            <Thumb $top={0} $h={94} />
          </Assets>
        </Side>

        <Stage>
          <ButtonRow>
            <StageButton $col={1}>6 Months</StageButton>
            <StageButton $col={2}>12 Months</StageButton>
            <StageButton $col={5}>Awaiting Approval</StageButton>
            <StageButton $col={8}>Total</StageButton>
          </ButtonRow>
          <Group><Handle /></Group>
          <GroupTag>
            <TagName><GroupIcon size={23} />RepeatingGroup Lead</TagName>
            <TagData><svg width="14" height="16" viewBox="0 0 14 16" aria-hidden="true"><path d="M0 2c2-3 12-3 14 0v2c-2 2-12 2-14 0zM0 6.500c3 1.500 11 1.500 14 0V9c-2 2-12 2-14 0zM0 11.500c3 1.500 11 1.500 14 0V14c-2 2.500-12 2.500-14 0z" fill="currentColor" /></svg></TagData>
          </GroupTag>
          <BottomThumb />
          <Thumb $top={2} $h={352} />

          <Panel $left={387}>
            <PanelHead><PanelTitle>Search for Leads</PanelTitle></PanelHead>
            <PanelBody $pad={22}>
              <Row><Label htmlFor="type">Type</Label><Choice id="type" value="Lead" w={252} /></Row>
              <ConstraintRow $top={27}>
                <Expression $wide>leadType =<ExprLink $c="#5da2ea">index's tab</ExprLink></Expression>
                <IconButton aria-label="Remove constraint">
                  <svg width="19" height="22" viewBox="0 0 19 22" fill="none" stroke="#83888b" strokeWidth="1.800" aria-hidden="true">
                    <path d="M0 4.500h19M6 4V1h7v3M2 5v14a2 2 0 0 0 2 2h11a2 2 0 0 0 2-2V5M6 8v9M9.500 8v9M13 8v9" />
                  </svg>
                </IconButton>
              </ConstraintRow>
              <AddButton><Plus />Add a new constraint</AddButton>
              <Row $top={30}><Label htmlFor="sort">Sort by</Label><Choice id="sort" value="" w={252} dim /></Row>
              <Row $top={25} $h={27}><Label htmlFor="ignore">Ignore empty constraints</Label><Check id="ignore" /></Row>
            </PanelBody>
            <PanelFoot><CloseButton>Close</CloseButton><DeleteButton>Delete</DeleteButton></PanelFoot>
          </Panel>

          <Panel $left={912}>
            <PanelHead>
              <PanelTitle>RepeatingGroup Lead</PanelTitle>
              <HeadIcons>
                <IconButton aria-label="Play"><FaPlayCircle size={24} /></IconButton>
                <IconButton aria-label="Info"><FaInfoCircle size={24} /></IconButton>
                <IconButton aria-label="Comment">
                  <svg width="27" height="26" viewBox="0 0 27 26" fill="none" stroke="currentColor" strokeWidth="2" aria-hidden="true">
                    <path d="M13.500 2C7 2 1 6 1 12c0 3 1.500 5.500 4 7.500-.2 2-1 3.500-2.500 5 3 0 5.500-1 7.500-3 1 .3 2.300.5 3.500.5 7 0 12.500-4 12.500-10S20.500 2 13.500 2z" />
                  </svg>
                </IconButton>
                <IconButton aria-label="Close panel"><Cross /></IconButton>
              </HeadIcons>
            </PanelHead>
            <PanelTabs>
              <PanelTab $active>Appearance</PanelTab><PanelTab>Layout</PanelTab><PanelTab>Conditional</PanelTab>
            </PanelTabs>
            <PanelBody $pad={23}>
              <Row><Label htmlFor="content">Type of content</Label><Choice id="content" value="Lead" w={252} /></Row>
              <Row $top={15}><Label as="span">Data source</Label><Expression><ExprLink $c="#fbab26">Search for Leads</ExprLink><More>More...</More></Expression></Row>
              <Rule />
              <Row $h={27}><Label htmlFor="fixrows">Set fixed number of rows</Label><Check id="fixrows" on /></Row>
              <Row $top={15}><Label $w={93} htmlFor="rows">Rows</Label><Choice id="rows" value="4" w={128} center dim /></Row>
              <Row $top={26} $h={27}><Label htmlFor="fixcols">Set fixed number of columns</Label><Check id="fixcols" on /></Row>
              <Row $top={15}><Label $w={93} htmlFor="cols">Columns</Label><Choice id="cols" value="1" w={128} center dim /></Row>
              <Row $top={25} $h={27}><Label htmlFor="partial">Show partial list on last page if needed</Label><Check id="partial" on /></Row>
              <Row $top={16} $h={24}>Separators</Row>
              <Row $top={17}>
                <Label $w={93} htmlFor="style">Style</Label><Choice id="style" value="None" w={128} center faint dim />
                <Label $indent htmlFor="width">Width</Label><Choice id="width" value="1" w={127} center faint dim />
              </Row>
              <Thumb $top={0} $h={290} $w={10} $dark />
            </PanelBody>
          </Panel>
        </Stage>
      </Workspace>

      <Taskbar>
        <Widgets aria-label="Widgets"><Weather /><Count $x={14} $y={-10}>2</Count></Widgets>
        <button aria-label="Start"><Windows /></button>
        <SearchBox>
          <svg width="24" height="28" viewBox="0 0 24 28" fill="none" aria-hidden="true">
            <path d="M11 3.500a8.500 8.500 0 1 0 7.500 12.500M15 18.500l7 7.500" stroke="#141b3c" strokeWidth="2.400" />
            <path d="M15.500 1l1.500 4.500L21.500 7 17 8.500 15.500 13 14 8.500 9.500 7 14 5.500zM20 11l1 2.500 2.500 1-2.500 1L20 18l-1-2.500-2.500-1 2.500-1z" fill="#2a0f33" />
          </svg>
          <TaskSearchInput aria-label="Search Windows" placeholder="Search" />
        </SearchBox>
        <Apps>
          <AppTile aria-label="Task view"><TaskView /></AppTile>
          <AppTile aria-label="Copilot preview"><CopilotPre /></AppTile>
          <AppTile aria-label="Copilot"><Copilot size={38} id="k1" /></AppTile>
          <AppTile aria-label="Microsoft 365"><M365 /></AppTile>
          <AppTile aria-label="File Explorer"><Explorer /></AppTile>
          <AppTile aria-label="Outlook" $dot="#7b8263"><Outlook /></AppTile>
          <AppTile aria-label="Chrome" $tone="light" $dot="#26808f" $dotW={24}><Chrome /></AppTile>
          <AppTile aria-label="Word" $tone="red" $dot="#c42b1c" $dotW={48}><Office tones={["#41a5ee", "#2b7cd3", "#185abd", "#103f91"]} tile="#185abd" ch="W" /></AppTile>
          <AppTile aria-label="Excel"><Office tones={["#33c481", "#21a366", "#107c41", "#185c37"]} tile="#107c41" ch="X" /></AppTile>
          <AppTile aria-label="Settings"><Gear /></AppTile>
          <AppTile aria-label="Act!" $dot="#7b8263"><Act size={36} /></AppTile>
          <AppTile aria-label="Teams" $dot="#857d66"><Teams /><Count $x={33} $y={4}>8</Count></AppTile>
        </Apps>
        <Tray>
          <TrayItem $gap={27} aria-label="Hidden icons"><Stroke size={17} weight={2.4}><path d="M1 17L12 6l11 11" /></Stroke></TrayItem>
          <TrayItem $gap={24} aria-label="OneDrive">
            <svg width="25" height="18" viewBox="0 0 25 18" aria-hidden="true"><path d="M6 16.500a5 5 0 0 1-.5-10A8 8 0 0 1 19 6a5.300 5.300 0 0 1 .5 10.500z" fill="#9b9b9b" stroke="#111" strokeWidth="1.500" /><path d="M5 15.800l8-5.500 8 3.500-2 2z" fill="#e5e5e5" /></svg>
          </TrayItem>
          <TrayItem $gap={11} aria-label="Wi-Fi">
            <svg width="25" height="18" viewBox="0 0 25 18" fill="none" stroke="#1a1a1a" strokeWidth="1.800" aria-hidden="true"><path d="M1 6.500a16 16 0 0 1 23 0M4.500 10a11 11 0 0 1 16 0M8 13.300a6.500 6.500 0 0 1 9 0" /><circle cx="12.500" cy="16" r="1.500" fill="#1a1a1a" stroke="none" /></svg>
          </TrayItem>
          <TrayItem $gap={12} aria-label="Volume">
            <svg width="25" height="20" viewBox="0 0 25 20" fill="none" stroke="#1a1a1a" strokeWidth="1.600" aria-hidden="true"><path d="M1 7v6h4l5 5V2L5 7zM13 7a5 5 0 0 1 0 6M16.500 4a9 9 0 0 1 0 12" /><path d="M20 1.500a13 13 0 0 1 0 17" stroke="#a5b0b5" /></svg>
          </TrayItem>
          <TrayItem $gap={26} aria-label="Battery">
            <svg width="25" height="20" viewBox="0 0 25 20" aria-hidden="true"><path d="M9 4h10a3 3 0 0 1 3 3v8a3 3 0 0 1-3 3H5a3 3 0 0 1-3-3v-3" fill="none" stroke="#1a1a1a" strokeWidth="1.500" /><path d="M10 6.500h10v9H5v-3zM23 8.500h1.500v5H23zM5 0L0 7h3l-1 5 6-7H4.500z" fill="#1a1a1a" /></svg>
          </TrayItem>
          <Clock>{"09:46\n09/09/2025"}</Clock>
        </Tray>
      </Taskbar>
    </Screen>
  );
}
